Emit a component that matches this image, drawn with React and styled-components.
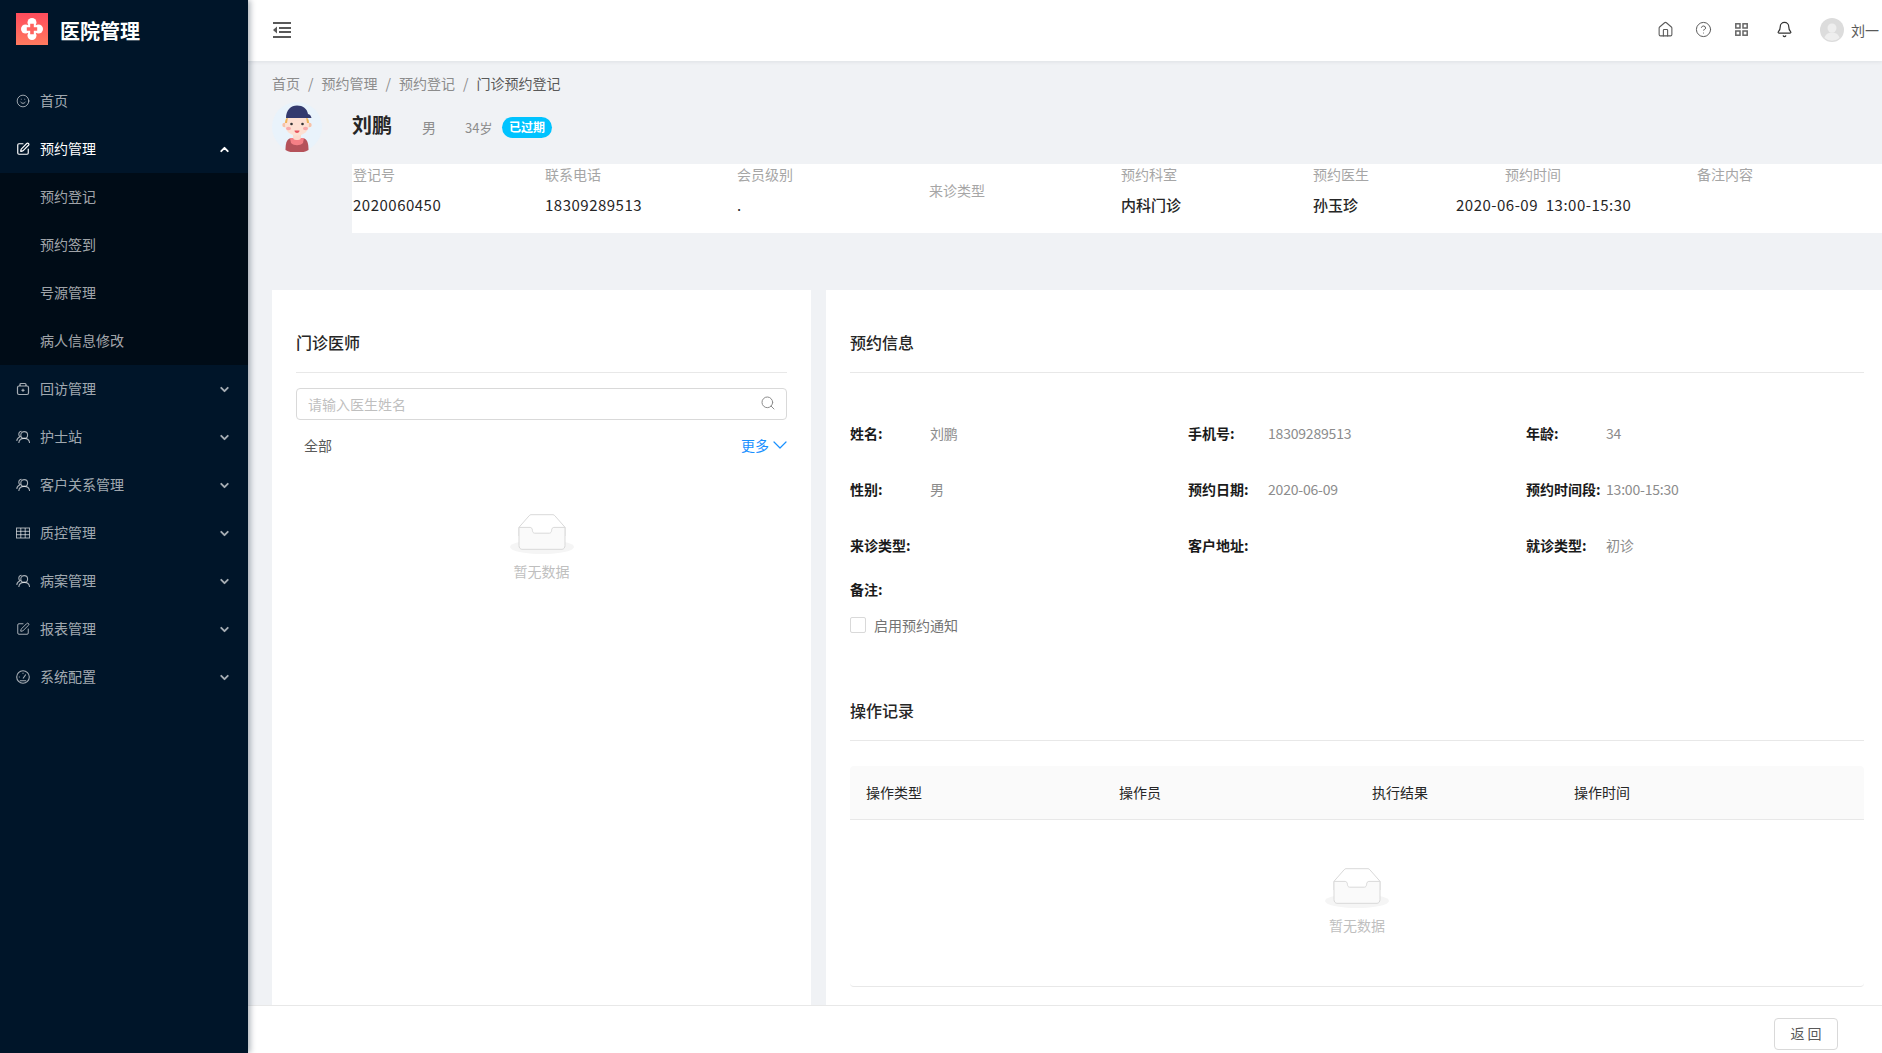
import React from 'react';
import styled, { createGlobalStyle } from 'styled-components';
import {
  Bell,
  ChevronDown,
  CircleHelp,
  House,
  Search,
  Smile,
  SquarePen,
} from 'lucide-react';

const GlobalStyle = createGlobalStyle`
  html, body, #root {
    margin: 0;
    height: 100%;
  }
  body {
    font-family: "Noto Sans CJK SC", "Noto Sans", sans-serif;
    font-size: 14px;
    color: #595959;
    overflow: hidden;
  }
  * {
    box-sizing: border-box;
  }
`;

function BagIcon() {
  return (
    <svg width="14" height="14" viewBox="0 0 14 14" fill="none" stroke="currentColor" strokeWidth="1.2">
      <rect x="1.5" y="4" width="11" height="8.5" rx="1.5" />
      <path d="M4 4V2.5a1 1 0 0 1 1-1h4a1 1 0 0 1 1 1V4" />
      <path d="M7 6.8v3M5.5 8.3h3" />
    </svg>
  );
}

function TeamIcon() {
  return (
    <svg width="14" height="14" viewBox="0 0 14 14" fill="none" stroke="currentColor" strokeWidth="1.1">
      <circle cx="8.2" cy="5" r="3.4" />
      <path d="M2.8 13c.3-3 2.400-4.600 5.400-4.600s5.100 1.600 5.400 4.600" />
      <path d="M5.600 1.300C4 1.300 2.800 2.600 2.800 4.200c0 1 .5 1.900 1.300 2.500C2.200 7.400 1 8.800.7 10.800" />
    </svg>
  );
}

function GridIcon() {
  return (
    <svg width="14" height="14" viewBox="0 0 14 14" fill="none" stroke="currentColor" strokeWidth="1">
      <rect x=".5" y="2" width="13" height="10" />
      <path d="M.5 5.300h13M.5 8.700h13M4.800 2v10M9.200 2v10" />
    </svg>
  );
}

function DialIcon() {
  return (
    <svg width="14" height="14" viewBox="0 0 14 14" fill="none" stroke="currentColor" strokeWidth="1.1">
      <circle cx="7" cy="7" r="6.300" />
      <path d="M7 8.500 9.800 4.500M2.800 7h1M7 2.800v1M3.800 10.800h6.400" />
    </svg>
  );
}

const menu = [
  { label: '首页', icon: <Smile size={14} strokeWidth={1.6} /> },
  {
    label: '预约管理',
    icon: <SquarePen size={14} />,
    open: true,
    children: ['预约登记', '预约签到', '号源管理', '病人信息修改'],
  },
  { label: '回访管理', icon: <BagIcon />, arrow: true },
  { label: '护士站', icon: <TeamIcon />, arrow: true },
  { label: '客户关系管理', icon: <TeamIcon />, arrow: true },
  { label: '质控管理', icon: <GridIcon />, arrow: true },
  { label: '病案管理', icon: <TeamIcon />, arrow: true },
  { label: '报表管理', icon: <SquarePen size={14} strokeWidth={1.7} />, arrow: true },
  { label: '系统配置', icon: <DialIcon />, arrow: true },
];

const strip = [
  { label: '登记号', value: '2020060450' },
  { label: '联系电话', value: '18309289513' },
  { label: '会员级别', value: '.' },
  { label: '来诊类型', only: true },
  { label: '预约科室', value: '内科门诊', strong: true },
  { label: '预约医生', value: '孙玉珍', strong: true },
  { label: '预约时间', value: '2020-06-09\u00a0\u00a013:00-15:30', wide: true },
  { label: '备注内容' },
];

const fields = [
  ['姓名:', '刘鹏'],
  ['手机号:', '18309289513'],
  ['年龄:', '34'],
  ['性别:', '男'],
  ['预约日期:', '2020-06-09'],
  ['预约时间段:', '13:00-15:30'],
  ['来诊类型:', ''],
  ['客户地址:', ''],
  ['就诊类型:', '初诊'],
];

const columns = [
  { title: '操作类型', width: 253 },
  { title: '操作员', width: 253 },
  { title: '执行结果', width: 202 },
  { title: '操作时间', width: 306 },
];

const LogoMark = () => (
  <svg width="32" height="32" viewBox="0 0 32 32">
    <defs>
      <linearGradient id="logo-bg" x1="0" y1="0" x2="0" y2="1">
        <stop offset="0" stopColor="#ff4b5c" />
        <stop offset="1" stopColor="#ff7a5f" />
      </linearGradient>
    </defs>
    <rect width="32" height="32" fill="url(#logo-bg)" />
    <g fill="#fff">
      <circle cx="16" cy="9.500" r="4.500" />
      <circle cx="22.500" cy="16" r="4.500" />
      <circle cx="16" cy="22.500" r="4.500" />
      <circle cx="9.500" cy="16" r="4.500" />
      <path d="M16 8.500 23.500 16 16 23.500 8.500 16z" />
    </g>
    <path fill="#ff6460" d="M14.200 10.800h3.600v3.400h3.400v3.600h-3.400v3.400h-3.600v-3.400h-3.400v-3.600h3.400z" />
    <path stroke="#ff6460" strokeWidth="1" d="M11.500 11.500 9.500 9.500M20.500 11.500l2-2M11.500 20.500l-2 2M20.500 20.500l2 2" />
  </svg>
);

const CollapseIcon = () => (
  <svg width="18" height="16" viewBox="0 0 18 16" fill="#595959">
    <rect x="0" y="0" width="18" height="2" />
    <rect x="6" y="5" width="12" height="2" />
    <rect x="6" y="9" width="12" height="2" />
    <rect x="0" y="14" width="18" height="2" />
    <path d="M4 4.500v7L0 8z" />
  </svg>
);

const AppsIcon = () => (
  <svg width="13" height="13" viewBox="0 0 13 13" fill="none" stroke="#666" strokeWidth="1.500">
    <rect x=".8" y=".8" width="4.200" height="4.200" />
    <rect x="8" y=".8" width="4.200" height="4.200" />
    <rect x=".8" y="8" width="4.200" height="4.200" />
    <rect x="8" y="8" width="4.200" height="4.200" />
  </svg>
);

const PatientAvatar = () => (
  <svg width="50" height="50" viewBox="0 0 50 50">
    <circle cx="25" cy="25" r="25" fill="#e9f3fb" />
    <path d="M13.500 48c0-6 1-10 4-11.500h15c3 1.500 4 5.500 4 11.500a25 25 0 0 1-23 0z" fill="#b5525a" />
    <path d="M18 36h14l-1 5c-3 3-9 3-12 0z" fill="#f57f85" />
    <rect x="21" y="30" width="8" height="8" rx="3" fill="#fcd9cc" />
    <circle cx="12.500" cy="23" r="2.200" fill="#f7c2a8" />
    <circle cx="37.500" cy="23" r="2.200" fill="#f7c2a8" />
    <ellipse cx="25" cy="23" rx="12" ry="10.500" fill="#fde0d2" />
    <path d="M13 21c0-3 1-5 3-6l-1 6zM37 21c0-3-1-5-3-6l1 6z" fill="#f0b458" />
    <path d="M14 16C14 8 19 3.500 25 3.500s10 3 11 8.500c2 .5 3 1.500 3.500 4H14z" fill="#333a6e" />
    <circle cx="19.500" cy="22" r="1.300" fill="#333" />
    <circle cx="30.500" cy="22" r="1.300" fill="#333" />
    <ellipse cx="16.500" cy="26.500" rx="2.500" ry="1.700" fill="#f9a9a9" />
    <ellipse cx="33.500" cy="26.500" rx="2.500" ry="1.700" fill="#f9a9a9" />
    <path d="M22.500 28.500h5c0 1.500-1 2.500-2.500 2.500s-2.500-1-2.500-2.500z" fill="#e8555e" />
  </svg>
);

const EmptyBox = () => (
  <svg width="64" height="41" viewBox="0 0 64 41">
    <ellipse cx="32" cy="33" rx="32" ry="7" fill="#f5f5f5" />
    <g fill="none" stroke="#d9d9d9">
      <path d="M55 13.300 44.900 1.800C44.400 1.100 43.700.7 43 .7H21c-.7 0-1.400.4-1.900 1.100L9 13.300V22h46z" />
      <path
        d="M41.600 16.300c0-1.600 1-2.900 2.200-2.900H55v18.100c0 2.100-1.300 3.800-2.900 3.800H11.900C10.300 35.300 9 33.600 9 31.500V13.400h11.200c1.200 0 2.200 1.300 2.200 2.900 0 1.600 1 2.900 2.200 2.900h14.800c1.200 0 2.200-1.300 2.200-2.900z"
        fill="#fafafa"
      />
    </g>
  </svg>
);

const Empty = () => (
  <EmptyWrap>
    <EmptyBox />
    <EmptyText>暂无数据</EmptyText>
  </EmptyWrap>
);

const App = () => (
  <>
    <GlobalStyle />
    <Layout>
      <Sidebar>
        <Brand>
          <LogoMark />
          <BrandName>医院管理</BrandName>
        </Brand>
        <Menu>
          {menu.map((item) => (
            <li key={item.label}>
              <MenuItem $active={item.open}>
                <MenuIcon>{item.icon}</MenuIcon>
                <MenuLabel>{item.label}</MenuLabel>
                {item.arrow && <MenuArrow size={13} strokeWidth={3.5} />}
                {item.open && <MenuArrow $up size={13} strokeWidth={3.5} />}
              </MenuItem>
              {item.children && (
                <SubMenu>
                  {item.children.map((child) => (
                    <SubItem key={child}>{child}</SubItem>
                  ))}
                </SubMenu>
              )}
            </li>
          ))}
        </Menu>
      </Sidebar>
      <Main>
        <Header>
          <CollapseIcon />
          <HeaderTools>
            <ToolIcon $w={38}><House size={17} strokeWidth={1.5} /></ToolIcon>
            <ToolIcon $w={38}><CircleHelp size={17} strokeWidth={1.4} /></ToolIcon>
            <ToolIcon $w={38}><AppsIcon /></ToolIcon>
            <ToolIcon $w={48}><Bell size={17} strokeWidth={1.7} color="#333" /></ToolIcon>
            <UserAvatar>
              <svg width="24" height="24" viewBox="0 0 24 24">
                <circle cx="12" cy="12" r="12" fill="#dcdcdc" />
                <circle cx="12" cy="10" r="4.500" fill="#eeeeee" />
                <path d="M4.500 20c1-4 4-5.500 7.500-5.500s6.500 1.500 7.500 5.500a12 12 0 0 1-15 0z" fill="#eeeeee" />
              </svg>
            </UserAvatar>
            <UserName>刘一</UserName>
          </HeaderTools>
        </Header>
        <Content>
          <Breadcrumb>
            <Crumb>首页</Crumb>
            <Slash>/</Slash>
            <Crumb>预约管理</Crumb>
            <Slash>/</Slash>
            <Crumb>预约登记</Crumb>
            <Slash>/</Slash>
            <Crumb $current>门诊预约登记</Crumb>
          </Breadcrumb>
          <Patient>
            <PatientAvatar />
            <PatientName>刘鹏</PatientName>
            <PatientMeta>男</PatientMeta>
            <PatientAge>34岁</PatientAge>
            <Badge>已过期</Badge>
          </Patient>
          <InfoStrip>
            {strip.map((col) => (
              <InfoCol key={col.label} $only={col.only}>
                <InfoLabel>{col.label}</InfoLabel>
                {col.value && (
                  <InfoValue $strong={col.strong} $wide={col.wide}>
                    {col.value}
                  </InfoValue>
                )}
              </InfoCol>
            ))}
          </InfoStrip>
          <Cards>
            <DoctorCard>
              <CardTitle>门诊医师</CardTitle>
              <SearchBox>
                <SearchInput placeholder="请输入医生姓名" readOnly />
                <SearchIcon size={16} strokeWidth={1.5} />
              </SearchBox>
              <FilterRow>
                <FilterAll>全部</FilterAll>
                <MoreLink>
                  更多
                  <MoreArrow size={24} strokeWidth={1.2} />
                </MoreLink>
              </FilterRow>
              <DoctorEmpty>
                <Empty />
              </DoctorEmpty>
            </DoctorCard>
            <DetailCard>
              <CardTitle>预约信息</CardTitle>
              <FieldGrid>
                {fields.map(([label, value]) => (
                  <Field key={label}>
                    <FieldLabel>{label}</FieldLabel>
                    <FieldValue>{value}</FieldValue>
                  </Field>
                ))}
              </FieldGrid>
              <Remark>备注:</Remark>
              <CheckRow>
                <CheckBox />
                <span>启用预约通知</span>
              </CheckRow>
              <SecondTitle>操作记录</SecondTitle>
              <RecordTable>
                <TableHead>
                  {columns.map((col) => (
                    <HeadCell key={col.title} $w={col.width}>
                      {col.title}
                    </HeadCell>
                  ))}
                </TableHead>
                <TableEmpty>
                  <Empty />
                </TableEmpty>
              </RecordTable>
            </DetailCard>
          </Cards>
        </Content>
        <Footer>
          <BackButton>返 回</BackButton>
        </Footer>
      </Main>
    </Layout>
  </>
);

const Layout = styled.div`
  display: flex;
  height: 100vh;
  overflow: hidden;
`;

const Sidebar = styled.aside`
  flex: 0 0 248px;
  background: #001529;
  box-shadow: 2px 0 6px rgba(0, 21, 41, 0.35);
  z-index: 3;
`;

const Brand = styled.div`
  display: flex;
  align-items: center;
  gap: 12px;
  height: 58px;
  padding: 0 16px;
`;

const BrandName = styled.div`
  margin-top: 2px;
  font-size: 20px;
  font-weight: 700;
  color: #fff;
`;

const Menu = styled.ul`
  list-style: none;
  margin: 19px 0 0;
  padding: 0;
`;

const MenuItem = styled.div`
  display: flex;
  align-items: center;
  height: 48px;
  padding: 0 17px 0 16px;
  color: ${({ $active }) => ($active ? '#fff' : 'rgba(255, 255, 255, 0.65)')};
`;

const MenuIcon = styled.span`
  display: flex;
  width: 24px;
`;

const MenuLabel = styled.span`
  margin-top: -2px;
`;

const MenuArrow = styled(ChevronDown)`
  margin-left: auto;
  transform: ${({ $up }) => ($up ? 'rotate(180deg)' : 'none')};
`;

const SubMenu = styled.ul`
  list-style: none;
  margin: 0;
  padding: 0;
  background: #000c17;
`;

const SubItem = styled.li`
  height: 48px;
  line-height: 46px;
  padding-left: 40px;
  color: rgba(255, 255, 255, 0.65);
`;

const Main = styled.div`
  flex: 1;
  min-width: 0;
  display: flex;
  flex-direction: column;
  background: #f0f2f5;
`;

const Header = styled.header`
  flex: 0 0 61px;
  display: flex;
  align-items: center;
  justify-content: space-between;
  padding: 0 0 2px 25px;
  background: #fff;
  box-shadow: 0 1px 4px rgba(0, 21, 41, 0.08);
  z-index: 2;
`;

const HeaderTools = styled.div`
  display: flex;
  align-items: center;
`;

const ToolIcon = styled.span`
  display: flex;
  justify-content: center;
  width: ${({ $w }) => $w}px;
  color: #595959;
`;

const UserAvatar = styled.span`
  display: flex;
  margin-left: 12px;
`;

const UserName = styled.span`
  margin-left: 7px;
  width: 31px;
  color: #595959;
  white-space: nowrap;
`;

const Content = styled.div`
  flex: 1;
  min-height: 0;
  overflow: hidden;
  padding: 12px 0 0 24px;
`;

const Breadcrumb = styled.div`
  display: flex;
  align-items: center;
  height: 20px;
`;

const Crumb = styled.span`
  color: ${({ $current }) => ($current ? '#595959' : '#8c8c8c')};
`;

const Slash = styled.span`
  margin: 0 8px;
  color: #8c8c8c;
`;

const Patient = styled.div`
  display: flex;
  align-items: center;
  margin-top: 9px;
  height: 50px;
`;

const PatientName = styled.div`
  margin: -5px 0 0 30px;
  width: 70px;
  font-size: 20px;
  font-weight: 700;
  color: #262626;
`;

const PatientMeta = styled.div`
  width: 43px;
  color: #8c8c8c;
`;

const PatientAge = styled.div`
  width: 37px;
  font-size: 13px;
  color: #8c8c8c;
`;

const Badge = styled.div`
  width: 50px;
  height: 21px;
  border-radius: 11px;
  background: #00c3ff;
  color: #fff;
  font-size: 12px;
  font-weight: 700;
  line-height: 20px;
  text-align: center;
`;

const InfoStrip = styled.div`
  display: flex;
  height: 69px;
  margin: 12px 0 0 80px;
  background: #fff;
`;

const InfoCol = styled.div`
  flex: 0 0 192px;
  padding: 1px 0 0 1px;
  display: flex;
  flex-direction: column;
  justify-content: ${({ $only }) => ($only ? 'center' : 'flex-start')};
  ${({ $only }) => ($only ? 'padding-bottom: 18px;' : '')}
`;

const InfoLabel = styled.div`
  height: 18px;
  line-height: 18px;
  color: #a6a6a6;
`;

const InfoValue = styled.div`
  margin-top: 11px;
  height: 22px;
  line-height: 22px;
  font-size: 15px;
  color: #262626;
  white-space: nowrap;
  font-weight: ${({ $strong }) => ($strong ? 500 : 400)};
  letter-spacing: ${({ $strong }) => ($strong ? 0 : '0.5px')};
  margin-left: ${({ $wide }) => ($wide ? '-49px' : 0)};
`;

const Cards = styled.div`
  display: flex;
  gap: 15px;
  margin-top: 57px;
`;

const Card = styled.section`
  background: #fff;
  padding-top: 40px;
  height: 740px;
`;

const DoctorCard = styled(Card)`
  flex: 0 0 539px;
  padding-left: 24px;
  padding-right: 24px;
`;

const DetailCard = styled(Card)`
  flex: 1;
  min-width: 0;
  padding-left: 24px;
  padding-right: 18px;
`;

const CardTitle = styled.h3`
  margin: 0;
  height: 43px;
  padding-bottom: 17px;
  font-size: 16px;
  font-weight: 500;
  line-height: 24px;
  color: #262626;
  border-bottom: 1px solid #e8e8e8;
`;

const SearchBox = styled.div`
  position: relative;
  margin-top: 15px;
`;

const SearchInput = styled.input`
  display: block;
  width: 100%;
  height: 32px;
  padding: 0 11px;
  border: 1px solid #d9d9d9;
  border-radius: 4px;
  outline: none;
  font: inherit;
  &::placeholder {
    color: #bfbfbf;
  }
`;

const SearchIcon = styled(Search)`
  position: absolute;
  right: 11px;
  top: 7px;
  color: #8c8c8c;
`;

const FilterRow = styled.div`
  display: flex;
  align-items: center;
  justify-content: space-between;
  margin-top: 14px;
  padding: 0 1px 0 8px;
  height: 22px;
`;

const FilterAll = styled.span`
  color: #595959;
`;

const MoreLink = styled.span`
  display: flex;
  align-items: center;
  color: #1890ff;
`;

const MoreArrow = styled(ChevronDown)`
  margin: 0 -6px 0 -1px;
`;

const DoctorEmpty = styled.div`
  margin-top: 58px;
`;

const EmptyWrap = styled.div`
  display: flex;
  flex-direction: column;
  align-items: center;
`;

const EmptyText = styled.div`
  margin-top: 5px;
  height: 22px;
  line-height: 22px;
  color: #bfbfbf;
`;

const FieldGrid = styled.div`
  display: grid;
  grid-template-columns: repeat(3, 338px);
  grid-auto-rows: 56px;
  margin-top: 49px;
`;

const Field = styled.div`
  display: flex;
  height: 22px;
  line-height: 22px;
`;

const FieldLabel = styled.span`
  flex: 0 0 80px;
  font-weight: 700;
  color: #1a1a1a;
  white-space: nowrap;
`;

const FieldValue = styled.span`
  color: #8c8c8c;
  letter-spacing: -0.2px;
`;

const Remark = styled.div`
  height: 22px;
  line-height: 22px;
  margin-top: -12px;
  font-weight: 700;
  color: #1a1a1a;
`;

const CheckRow = styled.label`
  display: flex;
  align-items: center;
  gap: 8px;
  margin-top: 14px;
  height: 22px;
  color: #737373;
`;

const CheckBox = styled.span`
  width: 16px;
  height: 16px;
  border: 1px solid #d9d9d9;
  border-radius: 2px;
  background: #fff;
`;

const SecondTitle = styled(CardTitle)`
  margin-top: 62px;
`;

const RecordTable = styled.div`
  margin-top: 25px;
  border-bottom: 1px solid #e8e8e8;
  border-radius: 4px;
`;

const TableHead = styled.div`
  display: flex;
  height: 54px;
  align-items: center;
  padding-bottom: 2px;
  background: #fafafa;
  border-bottom: 1px solid #e8e8e8;
  border-radius: 4px 4px 0 0;
`;

const HeadCell = styled.div`
  flex: 0 0 ${({ $w }) => $w}px;
  padding-left: 16px;
  color: #262626;
`;

const TableEmpty = styled.div`
  height: 166px;
  padding-top: 48px;
`;

const Footer = styled.footer`
  flex: 0 0 48px;
  display: flex;
  justify-content: flex-end;
  padding: 12px 44px 0 0;
  background: #fff;
  border-top: 1px solid #e8e8e8;
  z-index: 1;
`;

const BackButton = styled.button`
  width: 64px;
  height: 32px;
  padding: 0 0 2px;
  border: 1px solid #d9d9d9;
  border-radius: 4px;
  background: #fff;
  font: inherit;
  color: #595959;
`;

export default App;
